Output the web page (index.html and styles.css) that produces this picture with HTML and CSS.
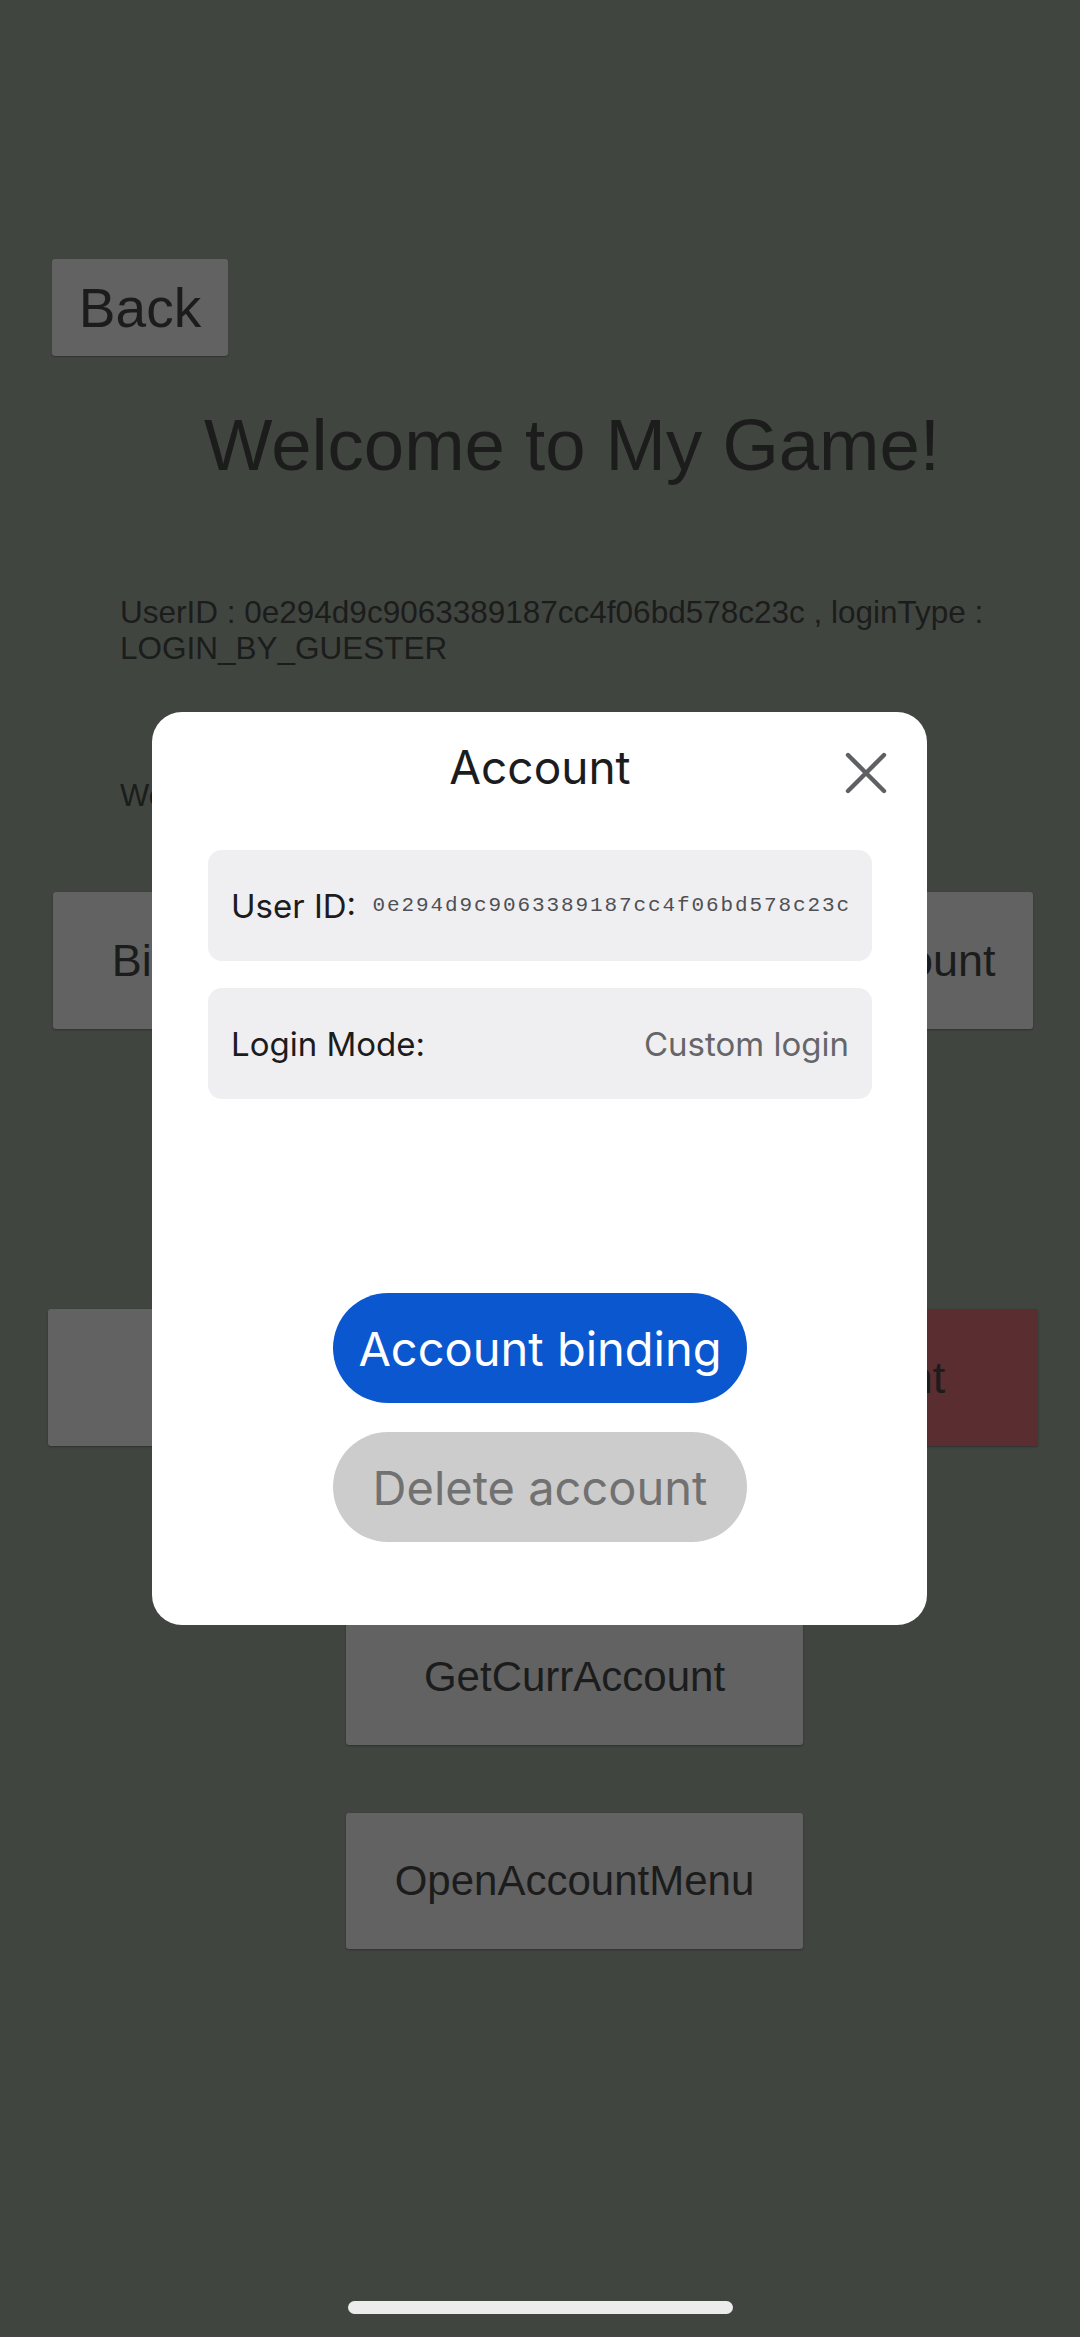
FILE: index.html
```html
<!DOCTYPE html>
<html>
<head>
<meta charset="utf-8">
<link rel="stylesheet" href="styles.css">
</head>
<body>
<div class="page">
  <div class="back">Back</div>
  <h1 class="title">Welcome to My Game!</h1>
  <p class="info">UserID : 0e294d9c9063389187cc4f06bd578c23c , loginType : LOGIN_BY_GUESTER</p>
  <p class="hello">Welcome back!</p>
  <div class="row row-a">
    <div class="ubtn ubtn-a1">BindAccount</div>
    <div class="ubtn ubtn-a2">SwitchAccount</div>
  </div>
  <div class="row row-b">
    <div class="ubtn ubtn-b1">Logout</div>
    <div class="ubtn ubtn-b2 red">DeleteAccount</div>
  </div>
  <div class="ubtn wide first">GetCurrAccount</div>
  <div class="ubtn wide second">OpenAccountMenu</div>

  <div class="modal">
    <div class="modal-head">Account</div>
    <svg class="close" viewBox="0 0 42 42" width="42" height="42">
      <path d="M3 3 L39 39 M39 3 L3 39" stroke="#5f6063" stroke-width="4.4" stroke-linecap="round" fill="none"/>
    </svg>
    <div class="field first-field">
      <span class="label">User ID:</span>
      <span class="value mono">0e294d9c9063389187cc4f06bd578c23c</span>
    </div>
    <div class="field">
      <span class="label">Login Mode:</span>
      <span class="value">Custom login</span>
    </div>
    <div class="actions">
      <div class="pill primary">Account binding</div>
      <div class="pill secondary">Delete account</div>
    </div>
  </div>

  <div class="home-indicator"></div>
</div>
</body>
</html>
```

FILE: styles.css
```css
html, body {
  margin: 0;
  padding: 0;
}
body {
  background: #414540;
  width: 1080px;
  height: 2337px;
  overflow: hidden;
  font-family: "Liberation Sans", Arial, sans-serif;
  color: #1b1c1b;
}
.page {
  position: relative;
  width: 1080px;
  height: 2337px;
  padding-top: 259px;
  box-sizing: border-box;
}
.back {
  margin-left: 52px;
  width: 176px;
  height: 97px;
  background: #626262;
  border-radius: 3px;
  box-shadow: 0 1px 1px rgba(0,0,0,0.25);
  font-size: 55px;
  display: flex;
  align-items: center;
  justify-content: center;
  box-sizing: border-box;
}
.title {
  margin: 53px 0 0 0;
  padding-left: 64px;
  font-size: 72.5px;
  line-height: 71px;
  font-weight: normal;
  text-align: center;
}
.info {
  margin: 114px 0 0 120px;
  width: 900px;
  font-size: 31.5px;
  line-height: 36px;
}
.hello {
  margin: 112px 0 0 120px;
  font-size: 31px;
  line-height: 36px;
}
.row {
  display: flex;
  justify-content: space-between;
}
.row-a {
  margin-top: 78px;
  padding: 0 47px 0 53px;
}
.row-b {
  margin-top: 280px;
  padding: 0 42px 0 48px;
}
.ubtn {
  height: 137px;
  background: #626262;
  border-radius: 3px;
  box-shadow: 0 1px 2px rgba(0,0,0,0.3);
  display: flex;
  align-items: center;
  justify-content: center;
  font-size: 45px;
  box-sizing: border-box;
}
.ubtn-a1 { width: 370px; }
.ubtn-a2 { width: 370px; }
.ubtn-b1 { width: 472px; }
.ubtn-b2 { width: 478px; }
.red {
  background: #5a2d30;
}
.wide {
  width: 457px;
  margin-left: 346px;
  font-size: 42px;
}
.first { margin-top: 162px; }
.second { margin-top: 68px; height: 136px; }

.modal {
  position: absolute;
  left: 152px;
  top: 712px;
  width: 775px;
  height: 913px;
  background: #ffffff;
  border-radius: 30px;
  padding: 27px 55px 0 56px;
  box-sizing: border-box;
  font-family: Inter, "Noto Sans", sans-serif;
}
.modal-head {
  font-size: 46px;
  line-height: 56px;
  height: 56px;
  text-align: center;
  color: #1c1c1e;
}
.close {
  position: absolute;
  right: 40px;
  top: 40px;
}
.field {
  height: 111px;
  background: #efeff1;
  border-radius: 14px;
  display: flex;
  align-items: center;
  justify-content: space-between;
  padding: 0 23px;
  margin-top: 27px;
  box-sizing: border-box;
}
.first-field {
  margin-top: 55px;
}
.label {
  font-size: 33px;
  color: #1c1c1e;
}
.value {
  font-size: 33px;
  color: #66666a;
}
.value.mono {
  font-family: "Liberation Mono", "DejaVu Sans Mono", monospace;
  font-size: 21px;
  letter-spacing: 1.9px;
  margin-right: -2px;
  color: #505054;
}
.actions {
  margin-top: 194px;
  display: flex;
  flex-direction: column;
  align-items: center;
  gap: 29px;
}
.pill {
  width: 414px;
  height: 110px;
  border-radius: 55px;
  display: flex;
  align-items: center;
  justify-content: center;
  font-size: 47px;
}
.primary {
  background: #0b57d0;
  color: #ffffff;
}
.secondary {
  background: #cccccc;
  color: #717171;
}
.home-indicator {
  position: absolute;
  left: 348px;
  top: 2301px;
  width: 385px;
  height: 13px;
  border-radius: 7px;
  background: #ececec;
}
```
